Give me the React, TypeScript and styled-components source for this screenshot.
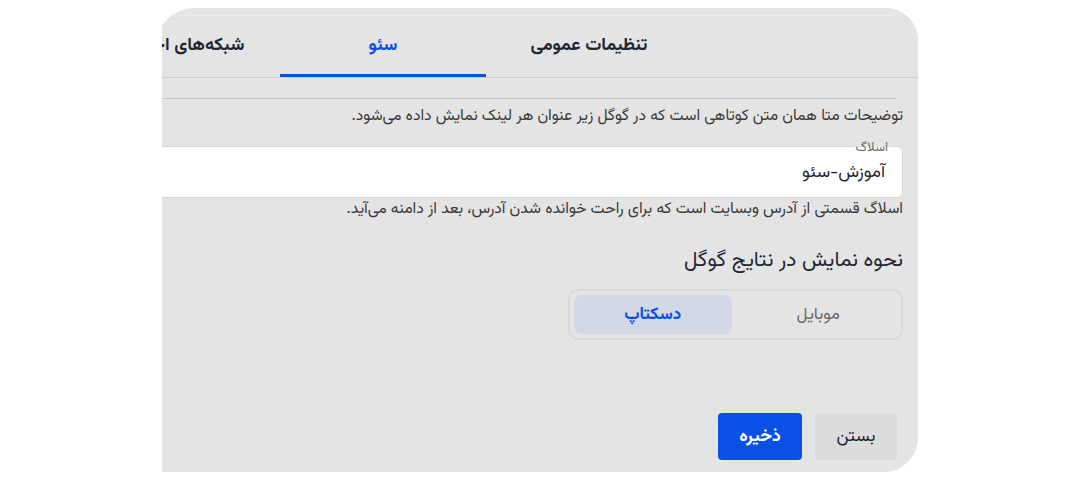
import React from 'react';
import styled, {createGlobalStyle} from "styled-components";

const colors = {
    panel: '#e4e4e4',
    text: '#1f2733',
    text2: '#3a3a3a',
    muted: '#6b6b6b',
    blue: '#0a4fe6',
    line: '#cdcdcd',
}

const font = `"Vazirmatn", "Noto Sans Arabic", "DejaVu Sans", sans-serif`

const GlobalStyle = createGlobalStyle`
  body {
    margin: 0;
    background: #ffffff;
    font-family: ${font};
  }
`

const App = () => {
    return (
        <>
            <GlobalStyle/>
            <Page>
                <Viewport>
                    <Panel dir="rtl">
                        <TabBar>
                            <Tab>تنظیمات عمومی</Tab>
                            <Tab $active>سئو</Tab>
                            <Tab>شبکه‌های اجتماعی</Tab>
                        </TabBar>
                        <Body>
                            <FieldTail/>
                            <Hint>توضیحات متا همان متن کوتاهی است که در گوگل زیر عنوان هر لینک نمایش داده می‌شود.</Hint>
                            <Field>
                                <FieldLabel>اسلاگ</FieldLabel>
                                <FieldValue>آموزش-سئو</FieldValue>
                            </Field>
                            <Hint $tight>اسلاگ قسمتی از آدرس وبسایت است که برای راحت خوانده شدن آدرس، بعد از دامنه می‌آید.</Hint>
                            <SectionTitle>نحوه نمایش در نتایج گوگل</SectionTitle>
                            <Segmented>
                                <Segment>موبایل</Segment>
                                <Segment $active>دسکتاپ</Segment>
                            </Segmented>
                        </Body>
                        <Footer>
                            <Button>بستن</Button>
                            <Button $primary>ذخیره</Button>
                        </Footer>
                    </Panel>
                </Viewport>
            </Page>
        </>
    );
};

const Page = styled.div`
  padding-top: 8px;
  padding-left: 162px;
`

const Viewport = styled.div`
  width: 756px;
  overflow: hidden;
`

const Panel = styled.div`
  margin-left: -7px;
  width: 763px;
  height: 464px;
  background-color: ${colors.panel};
  border-radius: 0 32px 34px 0;
  border-top-left-radius: 40px;
  display: flex;
  flex-direction: column;
  box-sizing: border-box;
`

const TabBar = styled.div`
  display: flex;
  height: 70px;
  padding-right: 226px;
  border-bottom: 1px solid ${colors.line};
  box-sizing: border-box;
  position: relative;
  flex-shrink: 0;

  &::before {
    content: '';
    position: absolute;
    top: 7px;
    left: 20px;
    right: 24px;
    border-top: 1px solid #ececec;
  }
`

const Tab = styled.div<{ $active?: boolean }>`
  flex: 0 0 206px;
  display: flex;
  align-items: center;
  justify-content: center;
  padding-top: 10px;
  box-sizing: border-box;
  font-size: 18px;
  font-weight: bold;
  white-space: nowrap;
  color: ${p => p.$active ? colors.blue : colors.text};
  border-bottom: 3px solid ${p => p.$active ? colors.blue : 'transparent'};
`

const Body = styled.div`
  display: flex;
  flex-direction: column;
  padding: 0 15px 0 0;
`

const FieldTail = styled.div`
  height: 20px;
  margin-right: 6px;
  border-bottom: 1px solid #c6c6c6;
`

const Hint = styled.div<{ $tight?: boolean }>`
  font-size: 15.7px;
  line-height: 22px;
  color: ${colors.text2};
  white-space: nowrap;
  margin-top: ${p => p.$tight ? '0' : '6px'};
`

const Field = styled.div`
  position: relative;
  margin-top: 19px;
  flex: 0 0 52px;
  background: #ffffff;
  border: 1px solid #d6d6d6;
  border-radius: 6px;
  box-sizing: border-box;
  display: flex;
  align-items: center;
  padding-right: 17px;
`

const FieldLabel = styled.span`
  position: absolute;
  top: -8px;
  right: 10px;
  padding: 0 4px;
  font-size: 13px;
  line-height: 18px;
  color: ${colors.muted};
  background: linear-gradient(${colors.panel} 45%, #ffffff 45%);
`

const FieldValue = styled.span`
  font-size: 17.6px;
  color: ${colors.text};
`

const SectionTitle = styled.h3`
  margin: 26px 0 0;
  font-size: 21px;
  line-height: 30px;
  font-weight: normal;
  color: ${colors.text};
`

const Segmented = styled.div`
  margin-top: 13px;
  align-self: flex-start;
  width: 335px;
  height: 51px;
  box-sizing: border-box;
  border: 2px solid #d9d9d9;
  border-radius: 10px;
  padding: 4px;
  display: grid;
  grid-template-columns: 1fr 1fr;
  gap: 8px;
`

const Segment = styled.div<{ $active?: boolean }>`
  display: flex;
  align-items: center;
  justify-content: center;
  border-radius: 8px;
  font-size: 17px;
  font-weight: ${p => p.$active ? 'bold' : 'normal'};
  color: ${p => p.$active ? colors.blue : colors.muted};
  background: ${p => p.$active ? '#d3d8e6' : 'transparent'};
`

const Footer = styled.div`
  margin-top: auto;
  display: flex;
  gap: 13px;
  padding: 0 21px 12px 0;
`

const Button = styled.button<{ $primary?: boolean }>`
  width: ${p => p.$primary ? '84px' : '82px'};
  height: 47px;
  border: none;
  border-radius: 4px;
  font-family: ${font};
  font-size: 17.5px;
  font-weight: ${p => p.$primary ? 'bold' : 'normal'};
  color: ${p => p.$primary ? '#ffffff' : colors.text};
  background: ${p => p.$primary ? colors.blue : '#dcdcdc'};
`

export default App;
